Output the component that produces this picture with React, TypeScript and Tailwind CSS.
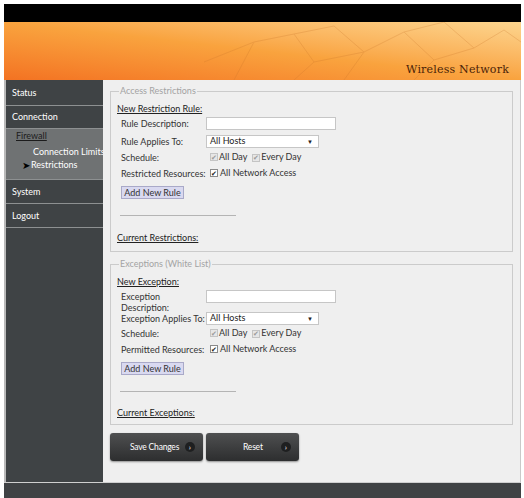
import React from 'react';

function Check({ dim }: { dim?: boolean }) {
  return (
    <span
      className={`inline-flex h-[8px] w-[8px] items-center justify-center border text-[7px] leading-none ${
        dim ? 'border-[#c4c4c4] bg-[#e6e6e6] text-[#9a9a9a]' : 'border-[#8a8a8a] bg-white text-[#222]'
      }`}
    >
      ✔
    </span>
  );
}

function Row({ label, h = 14, mt = 2, children }: { label: React.ReactNode; h?: number; mt?: number; children?: React.ReactNode }) {
  return (
    <div className="flex items-center" style={{ height: h, marginTop: mt }}>
      <div className="w-[89px] shrink-0 whitespace-nowrap pl-[4px] leading-[11px] text-[#333]">{label}</div>
      <div className="flex items-center">{children}</div>
    </div>
  );
}

function TextBox() {
  return <div className="h-[13px] w-[130px] border border-[#c6c6c6] bg-white" />;
}

function HostSelect() {
  return (
    <div className="flex h-[13px] w-[113px] items-center justify-between border border-[#c6c6c6] bg-white pl-[3px] pr-[5px] text-[#222]">
      <span>All Hosts</span>
      <span className="text-[6px]">▼</span>
    </div>
  );
}

function Schedule() {
  return (
    <div className="flex items-center whitespace-nowrap pl-[4px] text-[#333]">
      <Check dim />
      <span className="ml-[1px]">All Day</span>
      <span className="ml-[5px]"><Check dim /></span>
      <span className="ml-[1px]">Every Day</span>
    </div>
  );
}

function AllAccess() {
  return (
    <div className="flex items-center whitespace-nowrap pl-[4px] text-[#333]">
      <Check />
      <span className="ml-[2px]">All Network Access</span>
    </div>
  );
}

function AddButton() {
  return (
    <div className="ml-[4px] flex h-[13px] w-[63px] items-center justify-center whitespace-nowrap border border-[#a9a9c8] bg-[#d9d9f0] text-[#333]">
      Add New Rule
    </div>
  );
}

function DarkButton({ label, pad }: { label: string; pad: string }) {
  return (
    <div className="relative flex h-[28px] w-[93px] items-center rounded-[3px] bg-gradient-to-b from-[#4f5051] to-[#2d2e2f] shadow-[0_1px_2px_rgba(0,0,0,0.4)]">
      <span className={`whitespace-nowrap text-[8.5px] tracking-[-0.2px] text-white ${pad}`}>{label}</span>
      <span className="absolute right-[8px] top-[9px] flex h-[10px] w-[10px] items-center justify-center rounded-full bg-[#1e1f20] text-[8px] leading-none text-white">
        ›
      </span>
    </div>
  );
}

function SideItem({ label, h }: { label: string; h: number }) {
  return (
    <>
      <div className="flex items-center pl-[6px] text-white" style={{ height: h }}>
        {label}
      </div>
      <div className="h-[1px] bg-[#8d9091]" />
    </>
  );
}

export default function App() {
  return (
    <div className="flex h-[498px] w-[524px] flex-col bg-white pl-[4px] pr-[3px] pt-[4px] font-['Lato',sans-serif] text-[9px]">
      <div className="h-[18px] shrink-0 bg-black" />
      <div className="relative h-[58px] shrink-0 overflow-hidden bg-gradient-to-tr from-[#f37222] via-[#f9a33e] to-[#fcd58e]">
        <svg className="absolute inset-0 h-full w-full opacity-25" viewBox="0 0 517 58" preserveAspectRatio="none">
          <g fill="none" stroke="#c9742a" strokeWidth="1">
            <path d="M230 58 L250 20 L290 12 L310 40 L290 58" />
            <path d="M290 12 L330 4 L360 30 L340 58" />
            <path d="M360 30 L400 10 L430 38 L410 58" />
            <path d="M400 10 L440 0 L470 26 L430 38" />
            <path d="M470 26 L500 8 L517 20" />
            <path d="M310 40 L360 30" />
            <path d="M200 40 L250 20" />
          </g>
        </svg>
        <div className="absolute bottom-[2px] right-[12px] font-['DejaVu_Serif',serif] text-[11px] tracking-[0.2px] text-[#4a1f08]">
          Wireless Network
        </div>
      </div>
      <div className="flex min-h-0 flex-1">
        <aside className="w-[99px] shrink-0 border-l-[2px] border-[#b9b9b9] bg-[#3f4345]">
          <SideItem label="Status" h={25} />
          <SideItem label="Connection" h={22} />
          <div className="h-[50px] whitespace-nowrap bg-[#6f7273] pt-[1px]">
            <div className="pl-[10px] leading-[12px] text-[#1c1c1c] underline">Firewall</div>
            <div className="mt-[4px] pl-[27px] leading-[12px] text-white">Connection Limits</div>
            <div className="mt-[1px] flex items-center pl-[16px] leading-[12px] text-white">
              <span className="mr-[1px] text-[10px] text-black">➤</span>Restrictions
            </div>
          </div>
          <div className="h-[1px] bg-[#8d9091]" />
          <SideItem label="System" h={23} />
          <SideItem label="Logout" h={23} />
        </aside>
        <main className="flex-1 border-r border-[#c9c9c9] bg-[#efefef] pl-[7px] pr-[7px] pt-[5px]">
          <fieldset className="h-[167px] border border-[#cbcbcb] px-[6px]">
            <legend className="ml-[2px] px-[1px] leading-[12px] text-[#a3a3a3]">Access Restrictions</legend>
            <div className="mt-[6px] leading-[12px] text-[#222] underline">New Restriction Rule:</div>
            <Row label="Rule Description:" h={15} mt={1}><TextBox /></Row>
            <Row label="Rule Applies To:" h={14} mt={3}><HostSelect /></Row>
            <Row label="Schedule:" h={14} mt={2}><Schedule /></Row>
            <Row label="Restricted Resources:" h={14} mt={2}><AllAccess /></Row>
            <div className="mt-[6px]"><AddButton /></div>
            <div className="ml-[3px] mt-[16px] h-[1px] w-[116px] bg-[#b4b4b4]" />
            <div className="mt-[16px] leading-[12px] text-[#222] underline">Current Restrictions:</div>
          </fieldset>
          <fieldset className="mt-[6px] h-[167px] border border-[#cbcbcb] px-[6px]">
            <legend className="ml-[2px] px-[1px] leading-[12px] text-[#a3a3a3]">Exceptions (White List)</legend>
            <div className="mt-[6px] leading-[12px] text-[#222] underline">New Exception:</div>
            <Row label="Exception" h={14} mt={1}><TextBox /></Row>
            <Row label="Description:" h={10} mt={-1} />
            <Row label="Exception Applies To:" h={12} mt={0}><HostSelect /></Row>
            <Row label="Schedule:" h={14} mt={2}><Schedule /></Row>
            <Row label="Permitted Resources:" h={14} mt={2}><AllAccess /></Row>
            <div className="mt-[6px]"><AddButton /></div>
            <div className="ml-[3px] mt-[16px] h-[1px] w-[116px] bg-[#b4b4b4]" />
            <div className="mt-[15px] leading-[12px] text-[#222] underline">Current Exceptions:</div>
          </fieldset>
          <div className="mt-[8px] flex gap-[3px]">
            <DarkButton label="Save Changes" pad="pl-[20px]" />
            <DarkButton label="Reset" pad="pl-[37px]" />
          </div>
        </main>
      </div>
      <div className="h-[1px] shrink-0 bg-[#cfcfcf]" />
      <div className="h-[15px] shrink-0 bg-[#3f4244]" />
    </div>
  );
}
